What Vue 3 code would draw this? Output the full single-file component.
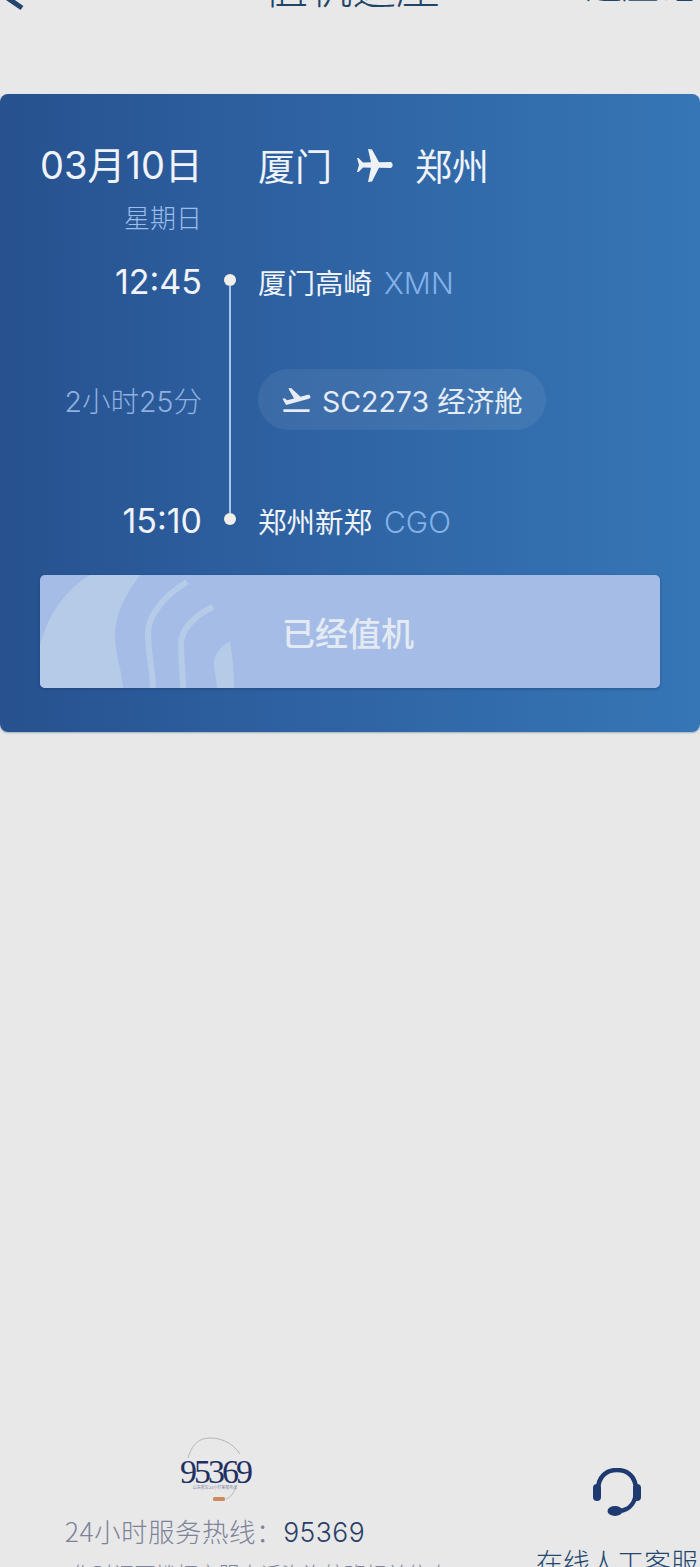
<script setup>
const lines = [
  { d: 'M147 7C125 20 108 40 108 58C108 80 113 95 113 113' },
  { d: 'M173 32C155 40 141 55 141 68C141 85 143 100 143 113' },
]
</script>

<template>
  <div class="page">
    <header class="top">
      <div class="top-row">
        <svg class="back" viewBox="0 0 30 60" width="30" height="60">
          <path d="M22 35L6 46L22 57" fill="none" stroke="#23466f" stroke-width="5" />
        </svg>
        <div class="title">值机选座</div>
        <div class="link">选座记录</div>
      </div>
    </header>

    <section class="card">
      <div class="date">03月10日</div>
      <div class="route">
        <span>厦门</span>
        <svg class="plane" viewBox="0 0 70 50" width="70" height="50">
          <path fill="#eef1f6" d="M50 22L38 22.3L31 9.5L27 9L30 22.3L22 22.6L17.500 18L16 18L18 25L16 32L17.500 32L22 27.500L30 27.700L27 42L31 41.500L38 27.700L50 28Q53.500 25 50 22Z" />
        </svg>
        <span>郑州</span>
      </div>
      <div class="week">星期日</div>

      <div class="time t1">12:45</div>
      <div class="rail">
        <i class="dot"></i>
        <i class="bar"></i>
        <i class="dot"></i>
      </div>
      <div class="port p1">厦门高崎<em>XMN</em></div>

      <div class="dur">2小时25分</div>
      <div class="pill-wrap">
        <div class="pill">
          <svg viewBox="0 0 24 24" width="33" height="33">
            <path fill="#e9eef6" d="M2.500 19h19v2h-19v-2zm19.570-9.360c-.21-.8-1.040-1.280-1.840-1.060L14.920 10l-6.900-6.430-1.930.51 4.140 7.170-4.970 1.330-1.970-1.540-1.450.39 2.590 4.490L21 11.490c.81-.23 1.280-1.050 1.070-1.850z" />
          </svg>
          <span>SC2273 经济舱</span>
        </div>
      </div>

      <div class="time t2">15:10</div>
      <div class="port p2">郑州新郑<em>CGO</em></div>

      <div class="btn">
        <svg class="btn-art" viewBox="0 0 260 113" width="260" height="113">
          <path fill="#b6cbe8" d="M0 70C8 40 25 15 50 0L100 0C85 20 75 40 75 60C75 80 82 95 83 113L0 113Z" />
          <path v-for="l in lines" :key="l.d" :d="l.d" fill="none" stroke="#b6cbe8" stroke-width="6" />
          <path fill="#b6cbe8" d="M190 66C180 72 174 80 174 88C174 98 177 105 177 113L194 113C194 100 193 85 190 66Z" />
        </svg>
        <span>已经值机</span>
      </div>
    </section>

    <div class="spacer"></div>

    <footer class="foot">
      <div class="hot">
        <svg class="logo" viewBox="0 0 80 64" width="80" height="64">
          <path d="M13 21C16 10 22 3 30 1.500C44 -1 58 6 65 17" fill="none" stroke="#b9b6b0" stroke-width="1" />
          <path d="M61 49C59 56 56 60 51 62" fill="none" stroke="#b9b6b0" stroke-width="1" />
          <text x="40" y="46" text-anchor="middle" class="logo-num">95369</text>
          <text x="40" y="52" text-anchor="middle" class="logo-sub">山东航空24小时客服热线</text>
          <rect x="38" y="60" width="12" height="4" rx="1.500" fill="#cf8a5c" />
        </svg>
        <div class="hot-text">24小时服务热线：<b>95369</b></div>
        <div class="hot-note">工作时间可拨打客服电话咨询航班相关信息</div>
      </div>
      <div class="svc">
        <svg viewBox="0 0 48 48" width="48" height="48">
          <path d="M5 22C5 9 13 2 24 2C35 2 43 9 43 22C43 33 38 42 26 43" fill="none" stroke="#1f3a70" stroke-width="4.500" />
          <rect x="0" y="16" width="8" height="17" rx="4" fill="#1f3a70" />
          <rect x="40" y="16" width="8" height="17" rx="4" fill="#1f3a70" />
          <ellipse cx="22" cy="43" rx="7.500" ry="5" fill="#1f3a70" />
        </svg>
        <div class="svc-text">在线人工客服</div>
      </div>
    </footer>
  </div>
</template>

<style>
html, body { margin: 0; background: #e8e8e8; }
</style>

<style scoped>
.page {
  width: 700px;
  height: 1567px;
  overflow: hidden;
  display: flex;
  flex-direction: column;
  background: #e8e8e8;
  font-family: "Noto Sans CJK SC", "Inter", sans-serif;
  font-weight: 300;
}
.top { height: 94px; flex: none; }
.top-row {
  margin-top: -49px;
  height: 60px;
  display: grid;
  grid-template-columns: 264px 321px 1fr;
  align-items: end;
  white-space: nowrap;
  color: #1f4468;
}
.back { display: block; }
.title { font-size: 44px; line-height: 52px; }
.link { font-size: 37px; line-height: 48px; margin-bottom: 4px; }

.card {
  flex: none;
  height: 638px;
  box-sizing: border-box;
  border-radius: 8px;
  background: linear-gradient(90deg, #27518f 0%, #2d5f9f 35%, #3676b6 100%);
  box-shadow: 0 1px 2px rgba(30, 60, 100, .35);
  padding: 46px 40px 0;
  display: grid;
  grid-template-columns: 162px 56px 1fr;
  grid-template-rows: 50px 42px 100px 138px 102px 3px 113px;
  color: #f0f3f8;
}
.date {
  grid-column: 1;
  font-family: "Inter", "Noto Sans CJK SC", sans-serif;
  font-size: 38px;
  font-weight: 400;
  line-height: 50px;
  text-align: right;
  white-space: nowrap;
}
.route {
  grid-column: 3;
  display: flex;
  align-items: center;
  font-size: 37px;
  line-height: 50px;
  font-weight: 400;
}
.plane { flex: none; margin: 0 4px 0 9px; }
.week {
  grid-column: 1;
  grid-row: 2;
  font-size: 26px;
  line-height: 34px;
  padding-top: 10px;
  text-align: right;
  color: #9bbde9;
}
.time {
  grid-column: 1;
  font-family: "Inter", "Noto Sans CJK SC", sans-serif;
  font-size: 34px;
  font-weight: 400;
  text-align: right;
  line-height: 44px;
}
.t1 { grid-row: 3; align-self: center; }
.t2 { grid-row: 5; align-self: center; }
.rail {
  grid-column: 2;
  grid-row: 3 / 6;
  display: flex;
  flex-direction: column;
  align-items: center;
  padding: 42px 0 47px;
  box-sizing: border-box;
}
.dot {
  width: 12px;
  height: 12px;
  border-radius: 50%;
  background: #f1eeea;
  flex: none;
}
.bar { width: 2px; flex: 1; background: #a9c4ea; }
.port {
  grid-column: 3;
  font-size: 28.5px;
  line-height: 44px;
  align-self: center;
  white-space: nowrap;
  font-weight: 400;
}
.port em {
  font-style: normal;
  font-family: "Inter", sans-serif;
  font-weight: 300;
  margin-left: 12px;
  color: #83b1e8;
  font-size: 30px;
}
.p1 { grid-row: 3; }
.p2 { grid-row: 5; }
.dur {
  grid-column: 1;
  grid-row: 4;
  align-self: center;
  margin-bottom: 4px;
  text-align: right;
  font-family: "Inter", "Noto Sans CJK SC", sans-serif;
  font-size: 28.5px;
  color: #8fb0e0;
  white-space: nowrap;
}
.pill-wrap { grid-column: 3; grid-row: 4; align-self: center; margin-bottom: 4px; }
.pill {
  display: flex;
  align-items: center;
  box-sizing: border-box;
  width: 288px;
  height: 61px;
  padding-left: 22px;
  border-radius: 31px;
  background: rgba(255, 255, 255, .07);
  color: #e6ecf5;
  font-family: "Inter", "Noto Sans CJK SC", sans-serif;
  font-size: 28.5px;
  font-weight: 400;
  white-space: nowrap;
}
.pill svg { margin-right: 9px; flex: none; }
.btn {
  grid-column: 1 / 4;
  grid-row: 7;
  position: relative;
  overflow: hidden;
  border-radius: 5px;
  background: #a5bde6;
  box-shadow: 0 1px 3px rgba(20, 50, 90, .4);
  display: flex;
  align-items: center;
  justify-content: center;
  padding-right: 4px;
  color: #e4eaf3;
  font-size: 33px;
  font-weight: 500;
}
.btn-art { position: absolute; left: 0; top: 0; }
.btn span { position: relative; }
.spacer { flex: 1; }
.foot {
  flex: none;
  height: 130px;
  display: flex;
  align-items: flex-start;
}
.hot {
  width: 430px;
  flex: none;
  display: flex;
  flex-direction: column;
  align-items: center;
}
.logo { display: block; margin-bottom: 12px; overflow: visible; }
.logo-num {
  font-family: "Liberation Serif", serif;
  font-size: 34px;
  fill: #1f2f63;
  letter-spacing: -3px;
}
.logo-sub { font-size: 4px; fill: #56648c; }
.hot-text {
  font-size: 26.5px;
  line-height: 36px;
  color: #7d8398;
  white-space: nowrap;
  letter-spacing: 0.5px;
}
.hot-text b { font-weight: 300; color: #2a3f66; font-family: "Inter", sans-serif; }
.hot-note {
  margin-top: 8px;
  padding-left: 70px;
  font-size: 21px;
  line-height: 30px;
  color: #7d8398;
  white-space: nowrap;
}
.svc {
  margin-left: 107px;
  width: 160px;
  flex: none;
  display: flex;
  flex-direction: column;
  align-items: center;
  padding-top: 31px;
  color: #23466f;
}
.svc-text {
  margin-top: 28px;
  font-size: 27px;
  line-height: 36px;
  white-space: nowrap;
}
</style>
